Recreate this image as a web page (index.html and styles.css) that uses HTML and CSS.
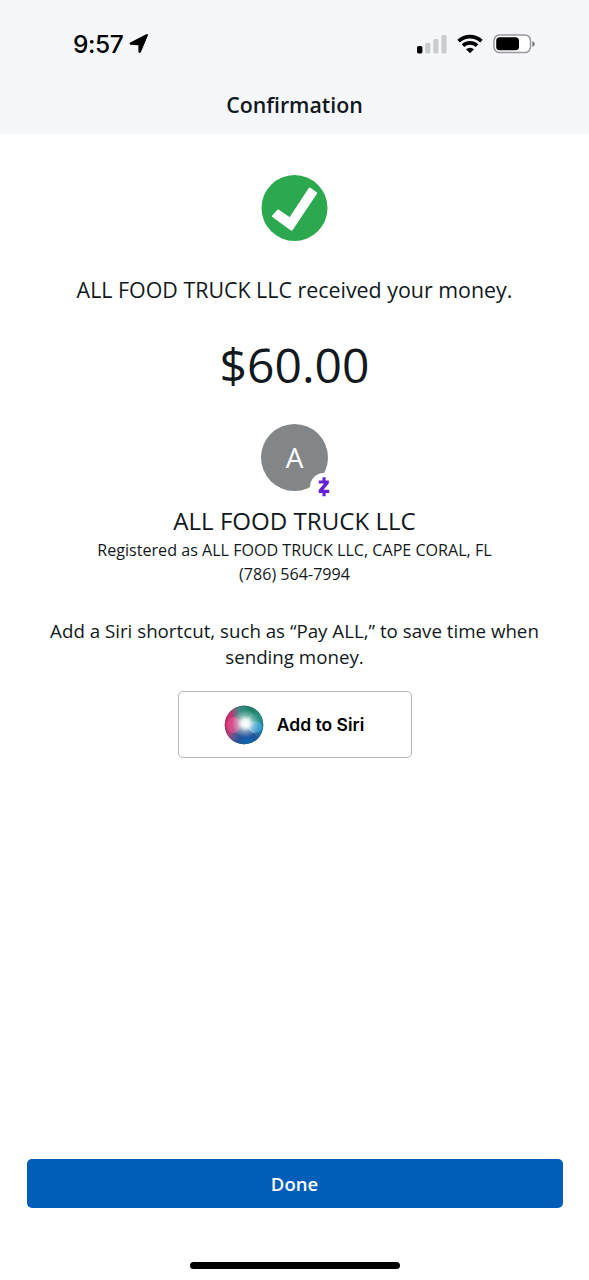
FILE: index.html
```html
<!DOCTYPE html>
<html lang="en">
<head>
<meta charset="utf-8">
<title>Confirmation</title>
<link rel="stylesheet" href="styles.css">
</head>
<body>
<div class="screen">
  <header class="header">
    <div class="status">
      <div class="status-left">
        <span class="time">9:57</span>
        <svg class="location" width="20" height="20" viewBox="0 0 20 20"><path d="M18.2 1.6 11.4 17.8Q10.4 19 10 17.6V11.4Q10 10.6 9.2 10.6L1.8 10.2Q.5 9.8 1.6 9.1L17 1Q18.8 .2 18.2 1.6Z" stroke="#000" stroke-width="1.2" stroke-linejoin="round"/></svg>
      </div>
      <div class="status-right">
        <svg width="30" height="20" viewBox="0 0 30 20"><rect x="0" y="12" width="5.4" height="7.4" rx="1.6"/><g fill="#c9cbcf"><rect x="8.2" y="8.8" width="5.2" height="10.6" rx="1.6"/><rect x="16.3" y="5" width="5.2" height="14.4" rx="1.6"/><rect x="24.4" y="1" width="5.2" height="18.4" rx="1.6"/></g></svg>
        <svg class="wifi" width="26" height="20" viewBox="0 0 26 20"><g fill="none" stroke="#000" stroke-width="3.7"><path d="M1.6 7.1Q6.5 2.6 13 2.6T24.4 7.1"/><path d="M6 11.6Q9 8.8 13 8.8T20 11.6"/></g><path d="M13 19.2 9 15.3Q10.7 13.7 13 13.7T17 15.3Z"/></svg>
        <svg class="battery" width="43" height="20" viewBox="0 0 43 20"><rect x="1" y="1" width="36.5" height="17.6" rx="5.6" fill="#fff" stroke="#97989b" stroke-width="1.5"/><rect x="3.2" y="3.3" width="22.8" height="13" rx="3.6"/><path d="M39.4 6.9Q41.8 7.8 41.8 9.9T39.4 12.9Z" fill="#77787b"/></svg>
      </div>
    </div>
    <h1 class="title">Confirmation</h1>
  </header>
  <main class="content">
    <svg class="check" width="67" height="67" viewBox="0 0 67 67"><circle cx="33.5" cy="33" r="33" fill="#2ca84e"/><path d="M12 41.2 17.2 35.6 29 43.6 48.7 13.7 55 18.2 30.6 54.6Z" fill="#fff" stroke="#fff" stroke-width="2.2" stroke-linejoin="round"/></svg>
    <p class="received">ALL FOOD TRUCK LLC received your money.</p>
    <p class="amount">$60.00</p>
    <div class="avatar">A
      <svg class="zelle" width="28" height="28" viewBox="0 0 28 28"><circle cx="14" cy="14" r="14" fill="#fff"/><path d="M8.8 7.4H18.8V10.4L13.5 16.8H19.2V20H15.6V23.3H12.5V20H8.7V17L14.1 10.5H8.8V7.4ZM12.5 4.3H15.6V8H12.5Z" fill="#6420d2"/></svg>
    </div>
    <h2 class="name">ALL FOOD TRUCK LLC</h2>
    <p class="detail registered">Registered as ALL FOOD TRUCK LLC, CAPE CORAL, FL</p>
    <p class="detail phone">(786) 564-7994</p>
    <p class="hint">Add a Siri shortcut, such as “Pay ALL,” to save time when<br>sending money.</p>
    <button class="siri">
      <svg width="40" height="40" viewBox="0 0 40 40">
        <defs>
          <linearGradient id="base" x1="0" y1=".35" x2="1" y2=".65"><stop offset="0" stop-color="#e81c64"/><stop offset=".28" stop-color="#a5477e"/><stop offset=".5" stop-color="#477994"/><stop offset="1" stop-color="#168caa"/></linearGradient>
          <radialGradient id="green" cx=".68" cy=".12" r=".52"><stop offset="0" stop-color="#168261"/><stop offset=".6" stop-color="#299883" stop-opacity=".8"/><stop offset="1" stop-color="#299883" stop-opacity="0"/></radialGradient>
          <radialGradient id="blue" cx=".6" cy=".98" r=".53"><stop offset="0" stop-color="#0868b8"/><stop offset=".5" stop-color="#214f99" stop-opacity=".9"/><stop offset="1" stop-color="#3157a5" stop-opacity="0"/></radialGradient>
          <radialGradient id="glow"><stop offset="0" stop-color="#fff"/><stop offset=".28" stop-color="#fff" stop-opacity=".9"/><stop offset=".6" stop-color="#fff" stop-opacity=".35"/><stop offset="1" stop-color="#fff" stop-opacity="0"/></radialGradient>
          <clipPath id="orb"><circle cx="20" cy="20" r="19.3"/></clipPath>
        </defs>
        <g clip-path="url(#orb)">
          <rect width="40" height="40" fill="url(#base)"/><rect width="40" height="40" fill="url(#green)"/><rect width="40" height="40" fill="url(#blue)"/>
          <ellipse cx="10" cy="20" rx="7" ry="8" fill="#ff5d9b" opacity=".45"/>
          <ellipse cx="31" cy="22" rx="7" ry="6" fill="#4fb8ea" opacity=".6"/>
          <circle cx="21.5" cy="18.5" r="14" fill="url(#glow)"/>
          <path d="M20 18 34 31 23 22Z" fill="#fff" opacity=".6"/>
          <path d="M20 20 28 7 23 21Z" fill="#fff" opacity=".2"/>
        </g>
        <circle cx="20" cy="20" r="18.8" fill="none" stroke="#315569" stroke-width="1" opacity=".4"/>
      </svg>
      <span>Add to Siri</span>
    </button>
  </main>
  <footer class="footer">
    <button class="done">Done</button>
    <div class="home-bar"></div>
  </footer>
</div>
</body>
</html>
```
FILE: styles.css
```css
* { box-sizing: border-box; }
body { margin: 0; background: #fff; color: #111820; font-family: "Open Sans", sans-serif; }
h1, h2, p { margin: 0; font-weight: 400; white-space: nowrap; }
button { margin: 0; padding: 0; }
.screen { display: flex; flex-direction: column; width: 589px; height: 1280px; }
.header { height: 134px; background: #f5f7fb; }
.status { display: flex; justify-content: space-between; height: 90px; padding: 29px 53px 0 73px; }
.status-left, .status-right { display: flex; align-items: center; height: 29px; }
.time { padding-top: 1px; font: 500 24.5px/29px Inter, sans-serif; color: #000; letter-spacing: -.4px; }
.location { margin-left: 6px; }
.wifi { margin-left: 10px; }
.battery { margin-left: 10px; }
.title { text-align: center; font-size: 21.35px; font-weight: 600; line-height: 30px; }
.content { flex: 1; display: flex; flex-direction: column; align-items: center; padding-top: 41px; }
.check { flex: none; }
.received { margin-top: 33px; font-size: 21.4px; line-height: 30px; }
.amount { margin-top: 28px; font-size: 48px; line-height: 64px; }
.avatar { position: relative; width: 67px; height: 67px; margin-top: 27px; border-radius: 50%; background: #828688; color: #fff; font-size: 28px; line-height: 67px; text-align: center; }
.zelle { position: absolute; left: 49px; top: 49px; }
.name { margin-top: 15px; font-size: 24.1px; line-height: 30px; }
.detail { font-size: 16.1px; line-height: 24px; }
.registered { margin-top: 2px; }
.hint { margin-top: 32px; font-size: 18.73px; line-height: 26px; text-align: center; }
.siri { display: flex; align-items: center; justify-content: center; gap: 13px; width: 234px; height: 67px; margin: 21px 0 0 1px; padding-right: 2px; border: 1.5px solid #b5b5b7; border-radius: 5px; background: #fff; color: #000; font: 600 17.5px/24px Inter, sans-serif; }
.footer { display: flex; flex-direction: column; align-items: center; height: 121px; }
.done { width: 536px; height: 48.5px; border: 0; border-radius: 5px; background: #005eb8; color: #fff; font: 600 18.5px/49px "Open Sans", sans-serif; }
.home-bar { width: 210px; height: 7px; margin-top: 54.5px; border-radius: 4px; background: #000; }
```
